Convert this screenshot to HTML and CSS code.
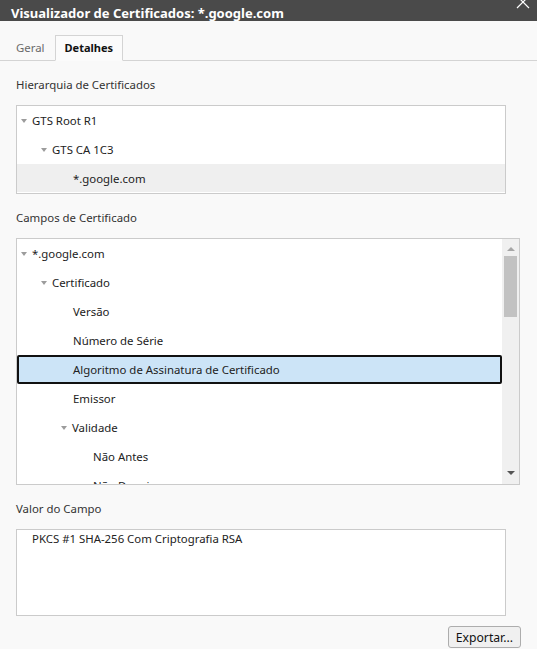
FILE: index.html
```html
<!DOCTYPE html>
<html lang="pt">
<head>
<meta charset="utf-8">
<title>Visualizador de Certificados</title>
<link rel="stylesheet" href="styles.css">
</head>
<body>
<div class="titlebar">
  <span class="title">Visualizador de Certificados: *.google.com</span>
  <svg class="close" width="14" height="10" viewBox="0 0 14 10"><path d="M1 -4 L13 8 M13 -4 L1 8" stroke="#fff" stroke-width="1.2" fill="none"/></svg>
</div>
<div class="tabs">
  <div class="tab">Geral</div>
  <div class="tab active">Detalhes</div>
</div>
<div class="content">
  <div class="label">Hierarquia de Certificados</div>
  <div class="box hier">
    <div class="row l0"><span class="tri"></span>GTS Root R1</div>
    <div class="row l1"><span class="tri"></span>GTS CA 1C3</div>
    <div class="row leaf l2 current">*.google.com</div>
  </div>

  <div class="label">Campos de Certificado</div>
  <div class="box fields">
    <div class="rows">
      <div class="row l0"><span class="tri"></span>*.google.com</div>
      <div class="row l1"><span class="tri"></span>Certificado</div>
      <div class="row leaf l2">Versão</div>
      <div class="row leaf l2">Número de Série</div>
      <div class="row leaf l2 selected">Algoritmo de Assinatura de Certificado</div>
      <div class="row leaf l2">Emissor</div>
      <div class="row l2"><span class="tri"></span>Validade</div>
      <div class="row leaf l3">Não Antes</div>
      <div class="row leaf l3">Não Depois</div>
    </div>
    <div class="scrollbar">
      <span class="arrow up"></span>
      <span class="thumb"></span>
      <span class="spacer"></span>
      <span class="arrow down"></span>
    </div>
  </div>

  <div class="label">Valor do Campo</div>
  <div class="box value">PKCS #1 SHA-256 Com Criptografia RSA</div>

  <div class="actions">
    <button class="btn">Exportar...</button>
  </div>
</div>
</body>
</html>
```
FILE: styles.css
```css
* { box-sizing: border-box; }
html, body {
  margin: 0;
  padding: 0;
  background: #f9f9f9;
  font-family: "Segoe UI", "Noto Sans", "Open Sans", sans-serif;
  font-size: 11.4px;
  color: #1f1f1f;
  overflow: hidden;
}
.titlebar {
  height: 21px;
  background: #4a4a4a;
  display: flex;
  align-items: flex-start;
  justify-content: space-between;
  padding-left: 11px;
  overflow: hidden;
}
.title {
  color: #fff;
  font-weight: bold;
  font-size: 13px;
  line-height: 20px;
  margin-top: 3px;
  white-space: nowrap;
}
.close {
  margin-right: 7px;
  margin-top: 0;
}
.tabs {
  display: flex;
  align-items: flex-end;
  height: 40px;
  padding-left: 6px;
  border-bottom: 1px solid #d4d4d4;
}
.tab {
  height: 26px;
  line-height: 24px;
  padding: 0 9px;
  color: #6a6a6a;
  margin-bottom: -1px;
  border: 1px solid transparent;
}
.tab.active {
  color: #111;
  font-weight: bold;
  font-size: 11px;
  background: #fbfbfb;
  border-color: #d4d4d4;
  border-bottom-color: #fbfbfb;
}
.content {
  padding: 0 17px 0 16px;
  display: flex;
  flex-direction: column;
  align-items: flex-start;
}
.label {
  height: 20px;
  line-height: 20px;
  margin-top: 14px;
  margin-bottom: 10px;
  color: #333;
}
.box {
  background: #fff;
  border: 1px solid #cbcbcb;
}
.hier {
  width: 490px;
  height: 89px;
}
.row {
  height: 29px;
  line-height: 29px;
  display: flex;
  align-items: center;
  white-space: nowrap;
  color: #222;
}
.tri {
  width: 0;
  height: 0;
  border-left: 3.5px solid transparent;
  border-right: 3.5px solid transparent;
  border-top: 4px solid #9c9c9c;
  margin-right: 5px;
}
.row.l0 { padding-left: 4px; }
.row.l1 { padding-left: 24px; }
.row.l2 { padding-left: 44px; }
.row.l3 { padding-left: 64px; }
.row.leaf.l2 { padding-left: 56px; }
.row.leaf.l3 { padding-left: 76px; }
.row.current { background: #efefef; height: 28px; }
.fields {
  width: 504px;
  height: 247px;
  display: flex;
  overflow: hidden;
}
.rows {
  flex: 1;
  overflow: hidden;
}
.row.leaf.selected {
  background: #cce4f7;
  border: 2px solid #111;
  border-radius: 2px;
  padding-left: 54px;
}
.scrollbar {
  width: 17px;
  background: #f0f0f0;
  display: flex;
  flex-direction: column;
  align-items: center;
}
.arrow {
  width: 0;
  height: 0;
  border-left: 4px solid transparent;
  border-right: 4px solid transparent;
}
.arrow.up {
  border-bottom: 4px solid #a6a6a6;
  margin-top: 8px;
}
.arrow.down {
  border-top: 4px solid #555;
  margin-bottom: 9px;
}
.thumb {
  width: 13px;
  height: 61px;
  background: #c2c2c2;
  margin-top: 5px;
}
.spacer { flex: 1; }
.value {
  width: 490px;
  height: 87px;
  padding: 1px 15px;
  line-height: 16px;
  color: #222;
}
.actions {
  align-self: stretch;
  display: flex;
  justify-content: flex-end;
  margin-top: 10px;
}
.btn {
  font-family: inherit;
  font-size: 12.2px;
  color: #111;
  height: 22px;
  padding: 0 7px;
  background: #f0f0f0;
  border: 1px solid #adadad;
  border-radius: 3px;
  margin-right: -1px;
}
```
